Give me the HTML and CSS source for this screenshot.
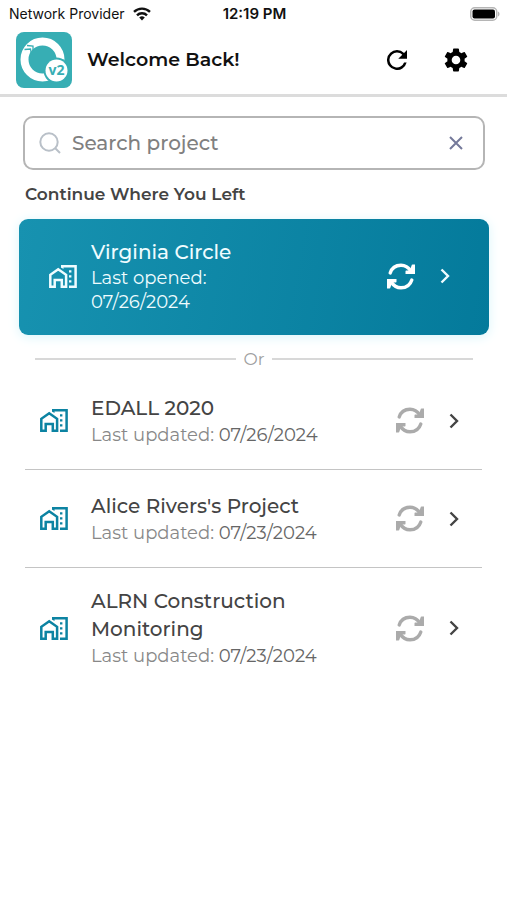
FILE: index.html
```html
<!DOCTYPE html>
<html lang="en">
<head>
<meta charset="utf-8">
<meta name="viewport" content="width=device-width, initial-scale=1">
<title>Projects</title>
<link rel="stylesheet" href="styles.css">
</head>
<body>
<svg class="symbols" aria-hidden="true">
  <symbol id="home" viewBox="0 0 28 23">
    <g fill="none" stroke="currentColor" stroke-width="2.5">
      <path d="M1.3 21.7V9.800L9.200 4.200l7.900 5.600v11.900h-4.300v-6.600H5.700v6.600z"/>
      <path d="M12 1.300h14.600v20.400H20"/>
    </g>
    <path d="M12 0h2.500v4L12 2.500zM20 5.200h2.400v2.400H20zM20 10.200h2.400v2.400H20zM20 15.200h2.400v2.400H20z" fill="currentColor"/>
  </symbol>
  <symbol id="sync" viewBox="0 0 28 27">
    <g fill="none" stroke="currentColor" stroke-width="3.400" stroke-linecap="round">
      <path d="M3.200 10C4.800 5 9 2.200 14 2.200c4.200 0 7.500 2.200 9.800 5.800"/>
      <path d="M24.800 17C23.200 22 19 24.800 14 24.800c-4.200 0-7.500-2.200-9.800-5.800"/>
    </g>
    <path d="M24.600 2.500q0-1 1-1H28V11H18.500V8.200q0-.700.700-.700h3.500zM3.400 24.500q0 1-1 1H0V16h9.500v2.800q0 .700-.700.700H5.300z" fill="currentColor"/>
  </symbol>
  <symbol id="chevron" viewBox="0 0 10 16">
    <path d="M1.500 1.500L8 8l-6.500 6.500" fill="none" stroke="currentColor" stroke-width="2.400"/>
  </symbol>
</svg>

<div class="status">
  <div class="carrier">
    <span>Network Provider</span>
    <svg class="wifi" viewBox="0 0 18 14" aria-hidden="true">
      <g fill="none" stroke="#111" stroke-width="2.400">
        <path d="M1 4.900a11.500 11.500 0 0 1 16 0"/>
        <path d="M4 8.300a7 7 0 0 1 10 0"/>
      </g>
      <path d="M9 13.500L6.200 10.600a4 4 0 0 1 5.600 0z" fill="#111"/>
    </svg>
  </div>
  <span class="clock">12:19 PM</span>
  <svg class="battery" viewBox="0 0 30 14" aria-hidden="true">
    <rect x="0.750" y="0.750" width="26" height="12.500" rx="4" fill="#fff" stroke="#b5b5b5" stroke-width="1.500"/>
    <rect x="2.500" y="2.500" width="22.500" height="9" rx="2" fill="#000"/>
    <path d="M28 4.500c2 .8 2 4.200 0 5z" fill="#b5b5b5"/>
  </svg>
</div>

<header class="header">
  <svg class="logo" viewBox="0 0 56 56" role="img" aria-label="v2">
    <rect width="56" height="56" rx="8" fill="#37aeb4"/>
    <circle cx="26.500" cy="27.500" r="18" fill="none" stroke="#fff" stroke-width="8"/>
    <path d="M8.500 17.500l6-.500 1 5.500M11 13.500l6 .500v5" fill="none" stroke="#37aeb4" stroke-width="1.300"/>
    <path d="M48.500 27.500H41L33 48l2 4 12-2z" fill="#37aeb4"/>
    <circle cx="40.500" cy="38.500" r="13" fill="#37aeb4"/>
    <circle cx="40.500" cy="38.500" r="11" fill="#fff"/>
    <text x="40.500" y="43" text-anchor="middle" class="logo-text">v2</text>
  </svg>
  <h1 class="title">Welcome Back!</h1>
  <button class="icon-button" aria-label="Refresh">
    <svg class="refresh-icon" viewBox="4 4 16 16" aria-hidden="true"><path d="M17.650 6.350A7.960 7.960 0 0 0 12 4a8 8 0 1 0 7.730 10h-2.080A6 6 0 1 1 12 6c1.660 0 3.140.69 4.220 1.780L13 11h7V4z"/></svg>
  </button>
  <button class="icon-button" aria-label="Settings">
    <svg class="gear-icon" viewBox="2 2 20 20" aria-hidden="true"><path d="M19.140 12.940c.04-.3.060-.61.060-.94 0-.32-.02-.64-.07-.94l2.030-1.580a.49.49 0 0 0 .12-.61l-1.920-3.320a.488.488 0 0 0-.59-.22l-2.390.96c-.5-.38-1.030-.7-1.620-.94l-.36-2.540a.484.484 0 0 0-.48-.41h-3.840c-.24 0-.43.17-.47.41l-.36 2.540c-.59.24-1.130.57-1.620.94l-2.390-.96c-.22-.08-.47 0-.59.22L2.740 8.870c-.12.21-.08.47.12.61l2.030 1.580c-.05.3-.09.63-.09.94s.02.640.07.94l-2.030 1.580a.49.49 0 0 0-.12.610l1.920 3.320c.12.220.37.290.59.220l2.390-.96c.5.380 1.030.7 1.620.94l.36 2.540c.05.240.240.410.480.410h3.840c.240 0 .440-.170.470-.410l.360-2.540c.590-.240 1.130-.560 1.620-.940l2.390.960c.220.080.470 0 .590-.220l1.920-3.320c.120-.220.070-.470-.120-.610zM12 15.600a3.600 3.600 0 1 1 0-7.200 3.600 3.600 0 0 1 0 7.200z"/></svg>
  </button>
</header>

<main class="content">
  <div class="search">
    <svg class="search-icon" viewBox="0 0 22 22" aria-hidden="true"><circle cx="10" cy="10" r="8.700"/><path d="M16 16l5 5"/></svg>
    <input class="search-input" type="text" placeholder="Search project" aria-label="Search project">
    <button class="clear" aria-label="Clear search">
      <svg class="clear-icon" viewBox="0 0 14 14" aria-hidden="true"><path d="M1 1l12 12M13 1L1 13"/></svg>
    </button>
  </div>

  <h2 class="section-title">Continue Where You Left</h2>

  <a class="card" href="#virginia">
    <svg class="home-icon" aria-hidden="true"><use href="#home"/></svg>
    <span class="info">
      <span class="name">Virginia Circle</span>
      <span class="opened">Last opened: 07/26/2024</span>
    </span>
    <svg class="sync-icon" aria-hidden="true"><use href="#sync"/></svg>
    <svg class="chevron-icon" aria-hidden="true"><use href="#chevron"/></svg>
  </a>

  <div class="separator">Or</div>

  <ul class="projects">
    <li class="item"><a class="row" href="#edall">
      <svg class="home-icon" aria-hidden="true"><use href="#home"/></svg>
      <span class="info">
        <span class="name">EDALL 2020</span>
        <span class="updated">Last updated: <span class="date">07/26/2024</span></span>
      </span>
      <svg class="sync-icon" aria-hidden="true"><use href="#sync"/></svg>
      <svg class="chevron-icon" aria-hidden="true"><use href="#chevron"/></svg>
    </a></li>
    <li class="item"><a class="row" href="#alice">
      <svg class="home-icon" aria-hidden="true"><use href="#home"/></svg>
      <span class="info">
        <span class="name">Alice Rivers's Project</span>
        <span class="updated">Last updated: <span class="date">07/23/2024</span></span>
      </span>
      <svg class="sync-icon" aria-hidden="true"><use href="#sync"/></svg>
      <svg class="chevron-icon" aria-hidden="true"><use href="#chevron"/></svg>
    </a></li>
    <li class="item"><a class="row" href="#alrn">
      <svg class="home-icon" aria-hidden="true"><use href="#home"/></svg>
      <span class="info">
        <span class="name">ALRN Construction Monitoring</span>
        <span class="updated">Last updated: <span class="date">07/23/2024</span></span>
      </span>
      <svg class="sync-icon" aria-hidden="true"><use href="#sync"/></svg>
      <svg class="chevron-icon" aria-hidden="true"><use href="#chevron"/></svg>
    </a></li>
  </ul>
</main>
</body>
</html>
```

FILE: styles.css
```css
* {
  box-sizing: border-box;
}

body {
  margin: 0;
  background: #fff;
  color: #444;
  font-family: Montserrat, Inter, sans-serif;
  font-weight: 500;
}

button {
  padding: 0;
  border: 0;
  background: none;
}

a {
  color: inherit;
  text-decoration: none;
}

svg {
  display: block;
  flex: none;
}

.symbols {
  display: none;
}

.status {
  display: grid;
  grid-template-columns: 1fr auto 1fr;
  align-items: center;
  height: 27px;
  padding: 0 7px 0 9px;
  color: #111;
  font-family: Inter, sans-serif;
  font-size: 14px;
  font-weight: 400;
}

.carrier {
  display: flex;
  align-items: center;
  gap: 8px;
  white-space: nowrap;
}

.wifi {
  width: 18px;
  height: 14px;
}

.clock {
  font-size: 15px;
  font-weight: 600;
}

.battery {
  width: 30px;
  height: 14px;
  justify-self: end;
}

.header {
  display: flex;
  align-items: center;
  height: 70px;
  padding: 0 35px 2px 16px;
  border-bottom: 3px solid #dcdcdc;
}

.logo {
  width: 56px;
  height: 56px;
}

.logo-text {
  fill: #37aeb4;
  font: 700 14px "Open Sans", sans-serif;
}

.title {
  flex: 1;
  margin: 0 0 0 15px;
  color: #111;
  font-size: 19px;
  font-weight: 600;
}

.icon-button {
  display: grid;
  place-items: center;
  width: 32px;
  height: 40px;
  margin-left: 27px;
}

.refresh-icon {
  width: 20px;
  height: 20px;
}

.gear-icon {
  width: 24px;
  height: 24px;
}

.search {
  display: flex;
  align-items: center;
  height: 54px;
  margin: 19px 22px 0 23px;
  padding: 0 15px 0 14px;
  border: 2px solid #b5b5b5;
  border-radius: 10px;
}

.search-icon {
  width: 22px;
  height: 22px;
  fill: none;
  stroke: #b9c0c8;
  stroke-width: 2;
}

.search-input {
  flex: 1;
  min-width: 0;
  padding: 0 0 0 11px;
  border: 0;
  outline: 0;
  background: none;
  color: #444;
  font: 500 20px Montserrat, Inter, sans-serif;
}

.search-input::placeholder {
  color: #808080;
  opacity: 1;
}

.clear {
  display: grid;
  place-items: center;
  width: 24px;
  height: 24px;
}

.clear-icon {
  width: 14px;
  height: 14px;
  stroke: #74799a;
  stroke-width: 2;
}

.section-title {
  margin: 10px 25px 0;
  font-size: 17px;
  font-weight: 600;
  line-height: 28px;
}

.card {
  display: flex;
  align-items: center;
  min-height: 116px;
  margin: 11px 18px 0 19px;
  padding: 12px 39px 14px 30px;
  border-radius: 9px;
  background: linear-gradient(100deg, #1792b0, #047a9b);
  box-shadow: 0 2px 12px #d9f5fa;
  color: #effcff;
}

.home-icon {
  width: 28px;
  height: 23px;
  color: #0c83a2;
}

.card .home-icon {
  color: #effcff;
}

.info {
  flex: 1;
  margin: 0 78px 0 23px;
}

.card .info {
  margin: 0 120px 0 14px;
}

.name,
.opened,
.updated {
  display: block;
}

.name {
  font-size: 20px;
  line-height: 28px;
}

.opened,
.updated {
  font-size: 18px;
  font-weight: 400;
}

.opened {
  line-height: 24px;
}

.updated {
  color: #888;
  line-height: 26px;
  white-space: nowrap;
}

.date {
  color: #666;
}

.sync-icon {
  width: 28px;
  height: 27px;
  margin-right: 25px;
  color: #ababab;
}

.card .sync-icon {
  color: #fff;
}

.chevron-icon {
  width: 10px;
  height: 16px;
}

.separator {
  display: flex;
  align-items: center;
  gap: 7px;
  margin: 11px 34px 0 35px;
  color: #a0a0a0;
  font-size: 17px;
  font-weight: 400;
  line-height: 26px;
}

.separator::before,
.separator::after {
  content: "";
  flex: 1;
  height: 2px;
  background: #d8d8d8;
}

.projects {
  margin: 0 25px;
  padding: 0;
  list-style: none;
}

.item + .item {
  border-top: 1px solid #c4c4c4;
}

.row {
  display: flex;
  align-items: center;
  min-height: 97px;
  padding: 19px 23px 19px 15px;
}
```
